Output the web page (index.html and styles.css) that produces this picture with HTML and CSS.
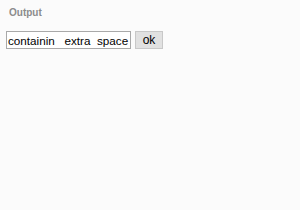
FILE: index.html
```html
<!DOCTYPE html>
<html lang="en">
<head>
    <meta charset="UTF-8">
    <title>Output</title>
    <link rel="stylesheet" href="styles.css">
</head>
<body>
    <div class="panel">
        <h3 class="title">Output</h3>
        <div class="row">
            <input type="text" class="field" value="containin   extra  space">
            <button class="btn">ok</button>
        </div>
    </div>
</body>
</html>
```

FILE: styles.css
```css
* {
    box-sizing: border-box;
    margin: 0;
    padding: 0;
}

body {
    background: #fbfbfb;
    font-family: "Liberation Sans", Arial, sans-serif;
}

.panel {
    padding: 7px 6px;
}

.title {
    font-size: 10px;
    font-weight: bold;
    color: #8c8c8c;
    padding-left: 3px;
    height: 24px;
}

.row {
    display: flex;
    gap: 4px;
}

.field {
    width: 125px;
    height: 18px;
    border: 1px solid #a9a9a9;
    background: #fff;
    padding: 0 1px;
    font-family: "Liberation Sans", Arial, sans-serif;
    font-size: 11.7px;
    color: #000;
}

.btn {
    width: 28px;
    height: 18px;
    border: 1px solid #c8c8c8;
    background: #e1e1e1;
    font-family: "Liberation Sans", Arial, sans-serif;
    font-size: 12px;
    color: #000;
}
```
